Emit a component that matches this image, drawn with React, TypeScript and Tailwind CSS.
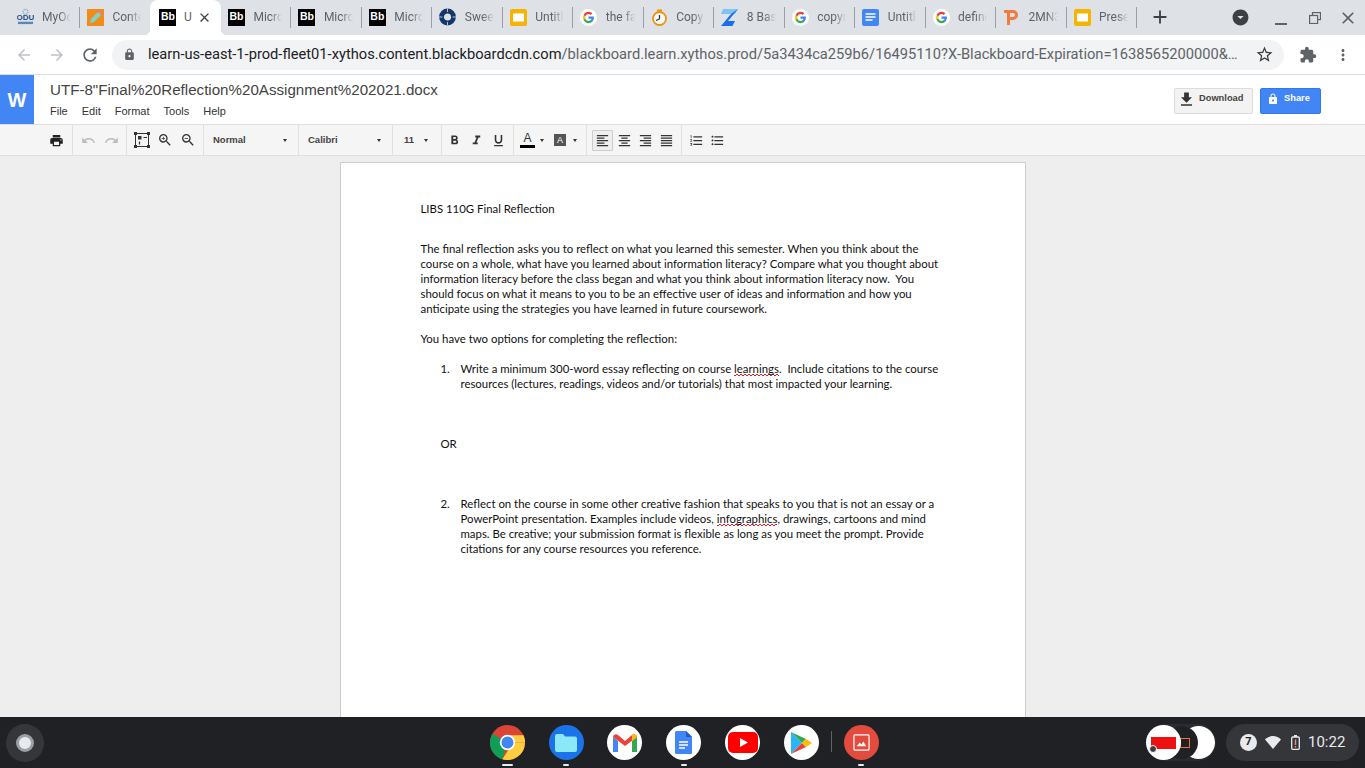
import React from 'react';
import {
  MdArrowBack, MdArrowForward, MdRefresh, MdLock, MdStarBorder, MdExtension, MdMoreVert, MdClose, MdAdd,
  MdPrint, MdUndo, MdRedo, MdZoomIn, MdZoomOut, MdFormatBold, MdFormatItalic, MdFormatUnderlined,
  MdFormatAlignLeft, MdFormatAlignCenter, MdFormatAlignRight, MdFormatAlignJustify,
  MdFormatListNumbered, MdFormatListBulleted, MdFileDownload, MdArrowDropDownCircle,
} from 'react-icons/md';

const GoogleIcon = () => (
  <svg viewBox="0 0 24 24" className="w-[17px] h-[17px] bg-white rounded-full p-[2px]">
    <path fill="#4285F4" d="M22 12.200c0-.7-.1-1.400-.2-2H12v3.900h5.600c-.2 1.300-1 2.400-2.100 3.100v2.600h3.400c2-1.800 3.100-4.500 3.100-7.600z" />
    <path fill="#34A853" d="M12 22.500c2.800 0 5.200-.9 6.900-2.600l-3.400-2.600c-.9.600-2.100 1-3.500 1-2.700 0-5-1.800-5.800-4.300H3.200v2.700c1.700 3.500 5.100 5.800 8.800 5.800z" />
    <path fill="#FBBC05" d="M6.200 14c-.2-.6-.3-1.300-.3-2s.1-1.400.3-2V7.300H3.200C2.400 8.600 2 10.300 2 12s.4 3.400 1.200 4.700L6.200 14z" />
    <path fill="#EA4335" d="M12 5.700c1.500 0 2.900.5 4 1.500l3-3C17.200 2.600 14.800 1.500 12 1.500c-3.700 0-7.100 2.300-8.800 5.800l3 2.700c.8-2.500 3.100-4.300 5.800-4.300z" />
  </svg>
);

const BbIcon = () => (
  <div className="w-[17px] h-[17px] bg-black text-white flex items-center justify-center text-[10.500px] font-bold font-['Liberation_Sans',sans-serif]">Bb</div>
);

const SlidesIcon = () => (
  <svg viewBox="0 0 17 17" className="w-[17px] h-[17px]">
    <rect width="17" height="17" rx="2" fill="#F4B400" />
    <rect x="3" y="4.500" width="11" height="8" fill="#FFF" />
  </svg>
);

const OduIcon = () => (
  <svg viewBox="0 0 18 18" className="w-[18px] h-[18px]">
    <circle cx="9" cy="3.500" r="2.600" fill="none" stroke="#7a9cc0" strokeWidth="1.400" strokeDasharray="1 1" />
    <text x="9" y="12.500" textAnchor="middle" fontSize="8.500" fontWeight="700" fontFamily="Liberation Sans" fill="#1f4e86">ODU</text>
    <rect x="1" y="14" width="16" height="2.500" fill="#5b87b5" />
  </svg>
);

const PencilIcon = () => (
  <svg viewBox="0 0 17 17" className="w-[17px] h-[17px]">
    <rect width="17" height="17" fill="#F08C1A" />
    <path d="M3 14l1-4 7-7 3 3-7 7z" fill="#7FD3C8" />
    <path d="M11 3l1.500-1.500 3 3L14 6z" fill="#E87A9A" />
  </svg>
);

const SweetIcon = () => (
  <svg viewBox="0 0 17 17" className="w-[18px] h-[18px]">
    <circle cx="8.500" cy="8.500" r="6" fill="none" stroke="#12376b" strokeWidth="4.800" />
    <path d="M8.500 0v3.500M8.500 13.500v3.500M0 8.500h3.500M13.500 8.500h3.500" stroke="#dee1e6" strokeWidth="0.800" />
  </svg>
);

const TimerIcon = () => (
  <svg viewBox="0 0 17 17" className="w-[17px] h-[17px]">
    <circle cx="8.500" cy="9.500" r="6.500" fill="#fff" stroke="#F29111" strokeWidth="1.800" />
    <path d="M8.500 10L5 11.500M8.500 10V6" stroke="#333" strokeWidth="1.300" />
    <path d="M6 1.500h5" stroke="#F29111" strokeWidth="2" />
  </svg>
);

const ZIcon = () => (
  <svg viewBox="0 0 17 17" className="w-[17px] h-[17px]">
    <path d="M2 0h15l-3 5H0z" fill="#7EC2F7" />
    <path d="M17 0L7 12h7l-2.500 5H0L10 5z" fill="#1A6EF0" />
  </svg>
);

const DocsTabIcon = () => (
  <svg viewBox="0 0 17 17" className="w-[17px] h-[17px]">
    <rect width="17" height="17" rx="2" fill="#4285F4" />
    <path d="M3.500 5h10M3.500 8h10M3.500 11h7" stroke="#fff" strokeWidth="1.400" />
  </svg>
);

const PIcon = () => (
  <svg viewBox="0 0 17 17" className="w-[17px] h-[17px]">
    <path d="M1 1h9a5 5 0 010 10H7v5H4V4H1z" fill="#F47B3E" />
    <path d="M7 4h3a2 2 0 010 4H7z" fill="#dee1e6" />
  </svg>
);

const tabs = [
  { title: 'MyOdu', icon: <OduIcon /> },
  { title: 'Content', icon: <PencilIcon /> },
  { title: 'U', icon: <BbIcon />, active: true },
  { title: 'Microsoft', icon: <BbIcon /> },
  { title: 'Microsoft', icon: <BbIcon /> },
  { title: 'Microsoft', icon: <BbIcon /> },
  { title: 'Sweet', icon: <SweetIcon /> },
  { title: 'Untitled', icon: <SlidesIcon /> },
  { title: 'the fact', icon: <GoogleIcon /> },
  { title: 'Copy', icon: <TimerIcon /> },
  { title: '8 Basic', icon: <ZIcon /> },
  { title: 'copyright', icon: <GoogleIcon /> },
  { title: 'Untitled', icon: <DocsTabIcon /> },
  { title: 'define', icon: <GoogleIcon /> },
  { title: '2MN3', icon: <PIcon /> },
  { title: 'Presen', icon: <SlidesIcon /> },
];

function TabStrip() {
  return (
    <div className="h-[35px] bg-[#dee1e6] flex items-stretch pl-[9.500px] font-['Roboto',sans-serif] shrink-0">
      {tabs.map((tab, i) => (
        <div
          key={i}
          className={
            tab.active
              ? 'w-[70.470px] bg-white rounded-t-lg flex items-center pl-[9px] pr-[9px] pb-[1px] shrink-0 relative'
              : 'w-[70.470px] flex items-center pl-[7px] pb-[1px] shrink-0 relative'
          }
        >
          <div className="w-[17px] flex justify-center shrink-0">{tab.icon}</div>
          <div
            className={
              tab.active
                ? 'ml-[7.500px] text-[12px] text-[#5f6368] flex-1'
                : 'ml-[8.500px] w-[29px] overflow-hidden whitespace-nowrap text-[12px] text-[#5f6368] [mask-image:linear-gradient(to_right,black_60%,transparent)]'
            }
          >
            {tab.title}
          </div>
          {tab.active && <MdClose className="text-[#3c4043] text-[15px]" />}
          {tab.active && (
            <>
              <div className="absolute left-[-6px] bottom-0 w-[6px] h-[6px] bg-[radial-gradient(circle_at_0_0,#dee1e6_6px,white_6.500px)]" />
              <div className="absolute right-[-6px] bottom-0 w-[6px] h-[6px] bg-[radial-gradient(circle_at_100%_0,#dee1e6_6px,white_6.500px)]" />
            </>
          )}
          {!tab.active && i !== 1 && <div className="absolute right-0 top-[7px] h-[21px] w-px bg-[#9aa0a6]" />}
        </div>
      ))}
      <div className="w-[45px] flex items-center justify-center pb-[1px]">
        <MdAdd className="text-[#3c4043] text-[22px]" />
      </div>
      <div className="flex-1 flex items-center justify-end pr-[7px]">
        <MdArrowDropDownCircle className="text-[#3c4043] text-[19px] mr-[25px]" />
        <div className="w-[12px] h-[2px] bg-[#5f6368] mt-[12px] mr-[22px]" />
        <svg viewBox="0 0 12 12" className="w-[12px] h-[12px] mr-[17px]" fill="none" stroke="#5f6368" strokeWidth="1.200">
          <rect x="3.500" y="0.600" width="8" height="7" />
          <rect x="0.600" y="3.500" width="8" height="8" fill="#dee1e6" />
        </svg>
        <MdClose className="text-[#5f6368] text-[20px]" />
      </div>
    </div>
  );
}

function AddressBar() {
  return (
    <div className="h-[40px] bg-white border-b border-[#dadce0] flex items-center font-['Roboto',sans-serif] shrink-0">
      <MdArrowBack className="ml-[15px] text-[#bdc1c6] text-[18px]" />
      <MdArrowForward className="ml-[15px] text-[#bdc1c6] text-[18px]" />
      <MdRefresh className="ml-[14px] text-[#5f6368] text-[20px]" />
      <div className="ml-[12px] w-[1172px] h-[30px] rounded-full bg-[#f1f3f4] flex items-center">
        <MdLock className="ml-[11px] text-[#5f6368] text-[13px]" />
        <div className="ml-[12px] w-[1094px] text-[14.680px] whitespace-nowrap overflow-hidden text-[#5f6368]">
          <span className="text-[#202124]">learn-us-east-1-prod-fleet01-xythos.content.blackboardcdn.com</span>
          /blackboard.learn.xythos.prod/5a3434ca259b6/16495110?X-Blackboard-Expiration=1638565200000&…
        </div>
        <MdStarBorder className="ml-[13px] text-[#3c4043] text-[19px]" />
      </div>
      <MdExtension className="ml-[15px] text-[#5f6368] text-[18px]" />
      <MdMoreVert className="ml-[17px] text-[#5f6368] text-[18px]" />
    </div>
  );
}

function DocHeader() {
  return (
    <div className="h-[49px] bg-white flex shrink-0 font-['Liberation_Sans',sans-serif]">
      <div className="w-[34px] bg-[#4285f4] flex items-center justify-center text-white text-[20px] font-bold">W</div>
      <div className="ml-[16px] flex flex-col">
        <div className="mt-[5px] text-[15.140px] leading-[20px] text-[#444]">UTF-8"Final%20Reflection%20Assignment%202021.docx</div>
        <div className="mt-[4px] flex gap-[14px] text-[11px] leading-[14px] text-[#333]">
          <span>File</span>
          <span>Edit</span>
          <span>Format</span>
          <span>Tools</span>
          <span>Help</span>
        </div>
      </div>
      <div className="flex-1 flex justify-end items-start pt-[13px] pr-[44px] gap-[7px] text-[9.300px] font-bold">
        <div className="w-[79px] h-[26px] bg-[#f3f3f3] border border-[#dcdcdc] rounded-[2px] flex items-center pl-[2px] pb-[4px] text-[#444]">
          <MdFileDownload className="text-[19px] text-[#333]" />
          <span className="ml-[3px]">Download</span>
        </div>
        <div className="w-[61px] h-[26px] bg-[#4285f4] border border-[#3079ed] rounded-[2px] flex items-center pl-[6px] pb-[4px] text-white">
          <MdLock className="text-[12px]" />
          <span className="ml-[5px]">Share</span>
        </div>
      </div>
    </div>
  );
}

const Caret = ({ className = '' }: { className?: string }) => (
  <div className={`w-0 h-0 border-x-[2.500px] border-x-transparent border-t-[3px] border-t-[#333] ${className}`} />
);

function ToolBar() {
  return (
    <div className="h-[32px] bg-[#f5f5f5] border-y border-[#e0e0e0] flex items-center text-[#333] font-['Liberation_Sans',sans-serif] shrink-0">
      <div className="w-[73px] h-full border-r border-[#e0e0e0] flex items-center justify-end pr-[8px] shrink-0">
        <MdPrint className="text-[15px] text-[#222]" />
      </div>
      <div className="w-[54px] h-full border-r border-[#e0e0e0] flex items-center pl-[8px] gap-[8px] shrink-0">
        <MdUndo className="text-[15px] text-[#bbb]" />
        <MdRedo className="text-[15px] text-[#bbb]" />
      </div>
      <div className="w-[77px] h-full border-r border-[#e0e0e0] flex items-center pl-[7px] gap-[7px] shrink-0">
        <svg viewBox="0 0 16 16" className="w-[16px] h-[16px]" fill="none" stroke="#333">
          <rect x="1.500" y="1.500" width="13" height="13" />
          <path d="M0 0h3v3H0zM13 0h3v3h-3zM0 13h3v3H0zM13 13h3v3h-3z" fill="#333" stroke="none" />
          <rect x="4" y="4" width="3.500" height="3.500" fill="#333" stroke="none" />
          <path d="M9.500 5.500h3.500M5.500 9.500v3" strokeWidth="1.200" />
        </svg>
        <MdZoomIn className="text-[16px]" />
        <MdZoomOut className="text-[16px]" />
      </div>
      <div className="w-[95px] h-full border-r border-[#e0e0e0] flex items-center pl-[9px] text-[9.500px] font-bold text-[#444] shrink-0">
        <span className="flex-1">Normal</span>
        <Caret className="mr-[11px]" />
      </div>
      <div className="w-[94px] h-full border-r border-[#e0e0e0] flex items-center pl-[9px] text-[9.500px] font-bold text-[#444] shrink-0">
        <span className="flex-1">Calibri</span>
        <Caret className="mr-[11px]" />
      </div>
      <div className="w-[49px] h-full border-r border-[#e0e0e0] flex items-center pl-[11px] text-[9.500px] font-bold text-[#444] shrink-0">
        <span className="flex-1">11</span>
        <Caret className="mr-[13px]" />
      </div>
      <div className="w-[72px] h-full border-r border-[#e0e0e0] flex items-center pl-[5px] gap-[7px] shrink-0">
        <MdFormatBold className="text-[15px]" />
        <MdFormatItalic className="text-[15px]" />
        <MdFormatUnderlined className="text-[15px]" />
      </div>
      <div className="w-[73px] h-full border-r border-[#e0e0e0] flex items-center pl-[6px] shrink-0">
        <div className="w-[15px] flex flex-col items-center text-[12px] leading-[12px] text-[#333]">
          A
          <div className="w-[15px] h-[3px] bg-black mt-[1px]" />
        </div>
        <Caret className="ml-[5px]" />
        <div className="ml-[10px] w-[12px] h-[12px] bg-[#555] text-white text-[9px] leading-[12px] text-center">A</div>
        <Caret className="ml-[7px]" />
      </div>
      <div className="w-[95px] h-full border-r border-[#e0e0e0] flex items-center pl-[5px] gap-[3px] shrink-0">
        <div className="w-[21px] h-[21px] border border-[#ccc] bg-[#eee] rounded-[1px] flex items-center justify-center">
          <MdFormatAlignLeft className="text-[15px]" />
        </div>
        <MdFormatAlignCenter className="text-[15px] ml-[1px]" />
        <MdFormatAlignRight className="text-[15px] ml-[3px]" />
        <MdFormatAlignJustify className="text-[15px] ml-[3px]" />
      </div>
      <div className="flex items-center pl-[7px] gap-[6px] shrink-0">
        <MdFormatListNumbered className="text-[15px]" />
        <MdFormatListBulleted className="text-[15px]" />
      </div>
    </div>
  );
}

// spellcheck zigzag, thinner than what decoration-wavy draws
const Squiggle = ({ children }: { children: React.ReactNode }) => (
  <span className="pb-[1px] [background:linear-gradient(90deg,#e02020_50%,transparent_50%)_0_100%/4px_1px_repeat-x,linear-gradient(90deg,#e02020_50%,transparent_50%)_2px_calc(100%_-_1px)/4px_1px_repeat-x]">{children}</span>
);

function DocPage() {
  return (
    <div className="flex-1 bg-[#eeeeee] overflow-hidden flex justify-center pt-[6px]">
      <div className="w-[686px] h-[700px] bg-white border border-[#ccc] pl-[80px] pt-[38px] text-[11.400px] leading-[15px] text-[#111] font-['Lato',sans-serif] whitespace-nowrap shrink-0">
        <p>LIBS 110G Final Reflection</p>
        <p className="mt-[25px]">
          The final reflection asks you to reflect on what you learned this semester. When you think about the<br />
          course on a whole, what have you learned about information literacy? Compare what you thought about<br />
          information literacy before the class began and what you think about information literacy now.&nbsp; You<br />
          should focus on what it means to you to be an effective user of ideas and information and how you<br />
          anticipate using the strategies you have learned in future coursework.
        </p>
        <p className="mt-[15px]">You have two options for completing the reflection:</p>
        <div className="mt-[15px] ml-[20px] flex">
          <span className="w-[20px]">1.</span>
          <p>
            Write a minimum 300-word essay reflecting on course <Squiggle>learnings</Squiggle>.&nbsp; Include citations to the course<br />
            resources (lectures, readings, videos and/or tutorials) that most impacted your learning.
          </p>
        </div>
        <p className="mt-[45px] ml-[20px]">OR</p>
        <div className="mt-[45px] ml-[20px] flex">
          <span className="w-[20px]">2.</span>
          <p>
            Reflect on the course in some other creative fashion that speaks to you that is not an essay or a<br />
            PowerPoint presentation. Examples include videos, <Squiggle>infographics</Squiggle>, drawings, cartoons and mind<br />
            maps. Be creative; your submission format is flexible as long as you meet the prompt. Provide<br />
            citations for any course resources you reference.
          </p>
        </div>
      </div>
    </div>
  );
}

const ChromeApp = () => (
  <svg viewBox="0 0 34 34" className="w-[35px] h-[35px]">
    <circle cx="17" cy="17" r="17" fill="#DB4437" />
    <path d="M17 17L2.300 8.500A17 17 0 0 0 12 33.300z" fill="#0F9D58" />
    <path d="M17 17h17A17 17 0 0 1 12 33.300L21 19z" fill="#FFCD40" />
    <path d="M17 10h15.600a17 17 0 0 1 1.400 7H23z" fill="#FFCD40" />
    <circle cx="17" cy="17" r="7.500" fill="#fff" />
    <circle cx="17" cy="17" r="5.800" fill="#4285F4" />
  </svg>
);

const FilesApp = () => (
  <div className="w-[35px] h-[35px] rounded-full bg-[#1a73e8] flex items-center justify-center">
    <svg viewBox="0 0 22 18" className="w-[22px] h-[18px]">
      <path d="M0 2a2 2 0 012-2h6l2 2.500h10a2 2 0 012 2V16a2 2 0 01-2 2H2a2 2 0 01-2-2z" fill="#8BE9F7" />
    </svg>
  </div>
);

const GmailApp = () => (
  <div className="w-[35px] h-[35px] rounded-full bg-white flex items-center justify-center">
    <svg viewBox="0 0 24 18" className="w-[24px] h-[18px]">
      <path d="M0 3v15h5V7z" fill="#4285F4" />
      <path d="M24 3v15h-5V7z" fill="#34A853" />
      <path d="M0 3a3 3 0 015-2l7 6 7-6a3 3 0 015 2L12 12z" fill="#EA4335" />
      <path d="M19 1a3 3 0 015 2l-5 4z" fill="#FBBC04" />
    </svg>
  </div>
);

const DocsApp = () => (
  <div className="w-[35px] h-[35px] rounded-full bg-white flex items-center justify-center">
    <svg viewBox="0 0 17 23" className="w-[17px] h-[23px]">
      <path d="M1.500 0H11l6 6v15.500a1.500 1.500 0 01-1.500 1.500h-14A1.500 1.500 0 010 21.500v-20A1.500 1.500 0 011.500 0z" fill="#4285F4" />
      <path d="M11 0l6 6h-6z" fill="#1a5fc9" />
      <path d="M4 11h9M4 14h9M4 17h6" stroke="#fff" strokeWidth="1.300" />
    </svg>
  </div>
);

const YoutubeApp = () => (
  <div className="w-[35px] h-[35px] rounded-full bg-white flex items-center justify-center">
    <svg viewBox="0 0 30 21" className="w-[30px] h-[21px]">
      <rect width="30" height="21" rx="5" fill="#FF0000" />
      <path d="M12 6l8 4.500-8 4.500z" fill="#fff" />
    </svg>
  </div>
);

const PlayApp = () => (
  <div className="w-[35px] h-[35px] rounded-full bg-white flex items-center justify-center">
    <svg viewBox="0 0 22 24" className="w-[22px] h-[24px]">
      <path d="M1 1l11 11L1 23z" fill="#29B6F6" />
      <path d="M1 1l15 7-4 4z" fill="#34A853" />
      <path d="M1 23l15-7-4-4z" fill="#EA4335" />
      <path d="M16 8l6 4-6 4-4-4z" fill="#FBBC04" />
    </svg>
  </div>
);

const GalleryApp = () => (
  <div className="w-[35px] h-[35px] rounded-full bg-[#e34b3e] flex items-center justify-center">
    <svg viewBox="0 0 18 18" className="w-[17px] h-[17px]" fill="none">
      <rect x="1" y="1" width="16" height="16" rx="1" stroke="#fff" strokeWidth="1.300" />
      <path d="M4 13l3-4 2 2 2-3 3 5z" fill="#fff" />
    </svg>
  </div>
);

const ShelfItem = ({ children, dash }: { children: React.ReactNode; dash: string }) => (
  <div className="w-[58.800px] h-full flex flex-col items-center pt-[8px] shrink-0 relative">
    {children}
    {dash && <div className={`absolute bottom-[2px] h-[2px] bg-[#e8eaed] rounded-full ${dash}`} />}
  </div>
);

function Shelf() {
  return (
    <div className="h-[51px] bg-[#202124] flex items-stretch shrink-0 font-['Roboto',sans-serif]">
      <div className="w-[478px] flex items-center pl-[6px] shrink-0">
        <div className="w-[38px] h-[38px] rounded-full bg-[#35363a] flex items-center justify-center">
          <div className="w-[18px] h-[18px] rounded-full border-[3px] border-[#9aa0a6] bg-[#e8eaed]" />
        </div>
      </div>
      <ShelfItem dash="w-[11px]"><ChromeApp /></ShelfItem>
      <ShelfItem dash="w-[6px]"><FilesApp /></ShelfItem>
      <ShelfItem dash=""><GmailApp /></ShelfItem>
      <ShelfItem dash="w-[6px]"><DocsApp /></ShelfItem>
      <ShelfItem dash=""><YoutubeApp /></ShelfItem>
      <ShelfItem dash=""><PlayApp /></ShelfItem>
      <div className="w-px h-[21px] bg-[#5f6368] self-center mb-[3px] shrink-0" />
      <div className="w-[59px] h-full flex flex-col items-center pt-[8px] shrink-0 relative">
        <GalleryApp />
        <div className="absolute bottom-[2px] w-[6px] h-[2px] bg-[#e8eaed] rounded-full" />
      </div>
      <div className="flex-1 flex items-center justify-end pr-[6px]">
        <div className="relative w-[70px] h-[37px] rounded-full bg-[#2b2c2f] mr-[10px]">
          <div className="absolute right-[1px] top-[2px] w-[33px] h-[33px] rounded-full bg-white" />
          <div className="absolute left-[19px] top-[2px] w-[33px] h-[33px] rounded-full bg-[#202124] flex items-center justify-center">
            <div className="w-[10px] h-[10px] border border-[#e8703a] ml-[6px]" />
          </div>
          <div className="absolute left-[0px] top-[1px] w-[35px] h-[35px] rounded-full bg-white overflow-hidden flex items-center">
            <div className="w-[25px] h-[12px] bg-[#ee1111] ml-[5px]" />
          </div>
          <div className="absolute left-[3px] top-[21px] w-[8px] h-[8px] rounded-full bg-[#3c4043] border border-white" />
        </div>
        <div className="w-[133px] h-[37px] rounded-full bg-[#35363a] flex items-center text-[#e8eaed]">
          <div className="ml-[14px] w-[17px] h-[17px] rounded-full bg-[#e8eaed] text-[#202124] text-[11px] font-bold flex items-center justify-center">7</div>
          <svg viewBox="0 0 16 13" className="ml-[8px] w-[16px] h-[13px]">
            <path d="M8 13L0 3.500C2 1.500 5 0 8 0s6 1.500 8 3.500z" fill="#e8eaed" />
          </svg>
          <svg viewBox="0 0 9 15" className="ml-[10px] w-[9px] h-[15px]">
            <rect x="0.700" y="2" width="7.600" height="12.300" rx="1" fill="none" stroke="#e8eaed" strokeWidth="1.300" />
            <rect x="3" y="0" width="3" height="2" fill="#e8eaed" />
            <rect x="3.800" y="4.500" width="1.400" height="5.500" fill="#f28b82" />
            <rect x="3.800" y="11" width="1.400" height="1.500" fill="#f28b82" />
          </svg>
          <span className="ml-[8px] text-[15px]">10:22</span>
        </div>
      </div>
    </div>
  );
}

export default function App() {
  return (
    <div className="w-[1365px] h-[768px] overflow-hidden flex flex-col">
      <TabStrip />
      <AddressBar />
      <DocHeader />
      <ToolBar />
      <DocPage />
      <Shelf />
    </div>
  );
}
